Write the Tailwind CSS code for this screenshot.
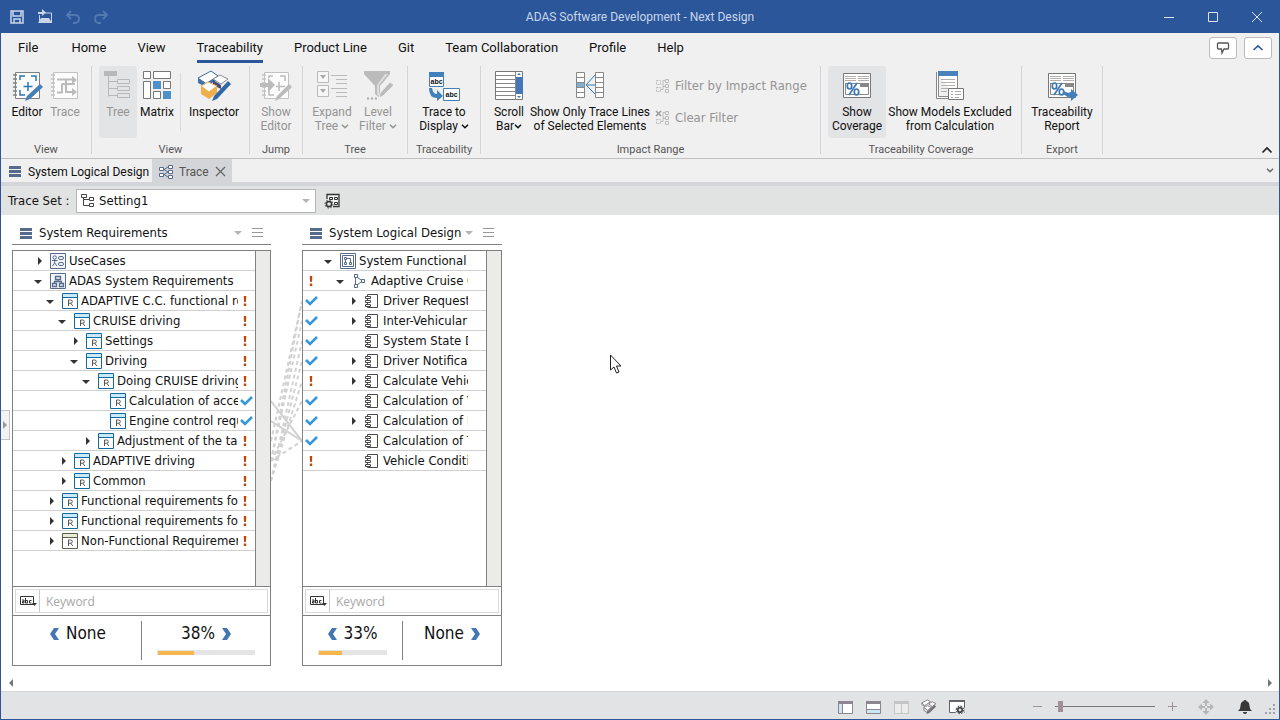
<!DOCTYPE html>
<html lang="en">
<head>
<meta charset="utf-8">
<title>ADAS Software Development - Next Design</title>
<script src="https://cdn.jsdelivr.net/npm/@tailwindcss/browser@4"></script>
</head>
<body class="h-screen overflow-hidden bg-white font-['DejaVu_Sans_Condensed','Open_Sans',sans-serif] text-[13px] text-[#111]">

<svg class="hidden" aria-hidden="true">
  <symbol id="bars" viewBox="0 0 12 11"><path d="M0 0h12v3H0zM0 4h12v3H0zM0 8h12v3H0z" fill="#566b8c"/></symbol>
  <symbol id="down" viewBox="0 0 16 16"><path d="M2 7h8L6 11z" fill="#333"/></symbol>
  <symbol id="right" viewBox="0 0 16 16"><path d="M6 4v8l4-4z" fill="#333"/></symbol>
  <symbol id="caret" viewBox="0 0 8 4"><path d="M0 0h8L4 4z" fill="#b4b4b4"/></symbol>
  <symbol id="menu" viewBox="0 0 11 10"><path d="M0 .5h11M0 4.5h11M0 8.5h11" stroke="#999"/></symbol>
  <symbol id="chev" viewBox="0 0 8 5"><path d="M1 .8l3 3 3-3" fill="none" stroke="currentColor" stroke-width="1.500"/></symbol>
  <symbol id="req" viewBox="0 0 16 16"><path d="M.5.5h15v15H.5z" fill="#fff" stroke="#10699f"/><path d="M1 1h14v3H1z" fill="#c7e9f8"/><path d="M1 4.5h14" stroke="#10699f"/><path d="M6.500 13V7h2.200a1.600 1.600 0 010 3.200H6.500m2.200 0L10.800 13" fill="none" stroke="#555"/></symbol>
  <symbol id="reqnf" viewBox="0 0 16 16"><path d="M.5.5h15v15H.5z" fill="#fff" stroke="#5c5c48"/><path d="M1 1h14v3H1z" fill="#e6eed8"/><path d="M1 4.5h14" stroke="#5c5c48"/><path d="M6.500 13V7h2.200a1.600 1.600 0 010 3.200H6.500m2.200 0L10.800 13" fill="none" stroke="#555"/></symbol>
  <symbol id="usecase" viewBox="0 0 16 16"><g fill="none" stroke="#566b8c"><path d="M.5.5h15v15H.5z" fill="#f3f5f8"/><circle cx="4.7" cy="4.5" r="1.7"/><path d="M2 7.5h5.5M4.7 6.5V10M2.500 13l2.200-3L7 13"/><rect x="8.5" y="3.5" width="5" height="3" rx="1.5"/><rect x="8.5" y="9.5" width="5" height="3" rx="1.5"/></g></symbol>
  <symbol id="hier" viewBox="0 0 16 16"><g fill="none" stroke="#566b8c"><path d="M.5.5h15v15H.5z" fill="#f3f5f8"/><path d="M5.500 3.500h5v3h-5zM2.500 10.500h4v3h-4zM9.500 10.500h4v3h-4zM8 6.500v2M4.500 10.500v-2h7v2" stroke-width="1.300"/></g></symbol>
  <symbol id="func" viewBox="0 0 16 16"><g fill="none" stroke="#566b8c"><path d="M.5.5h15v15H.5z" fill="#fff"/><path d="M2.500 2.500h11v11h-11z"/><path d="M4.500 4.500h2v2h-2zM4.500 9.500h2v2h-2zM9.500 9.500h2v2h-2zM6.500 5.500h4v4M5.500 6.500v3"/></g></symbol>
  <symbol id="flow" viewBox="0 0 16 16"><g fill="#fff" stroke="#566b8c"><path d="M3.500 3l7 5-7 5V3" fill="none"/><path d="M2.500 1.500h3v3h-3zM9.500 6.500h3v3h-3zM2.500 11.500h3v3h-3z"/></g></symbol>
  <symbol id="comp" viewBox="0 0 16 16"><g fill="#fff" stroke="#4a4a4a"><path d="M3.500 1.500h10v13h-10z"/><path d="M1.500 3.500h5v2h-5zM1.500 7.500h5v2h-5zM1.500 11.500h5v2h-5z"/></g></symbol>
  <symbol id="check" viewBox="0 0 13 10"><path d="M1 4l4 4 7-7" fill="none" stroke="#3498db" stroke-width="2.600"/></symbol>
  <symbol id="bang" viewBox="0 0 4 10"><path d="M.8 0h2.400v2.500L2.800 6H1.200L.8 2.500zM.8 7.500h2.400V10H.8z" fill="#c0470a"/></symbol>
  <symbol id="abc" viewBox="0 0 17 12"><path d="M.5 1.500h13v8H.5z" fill="#fff" stroke="#333"/><path d="M2 5h2v3H2.500V6.500H4M5.500 3v5h2V5.500h-2M11.500 5.500h-2V8h2" fill="none" stroke="#333"/><path d="M12 8h5l-2.500 3z" fill="#333"/></symbol>
  <symbol id="notebook" viewBox="0 0 32 32"><path d="M4.500 2.500h24v26h-24z" fill="#fcfcfc" stroke="currentColor"/><path d="M2 5h4M2 9h4M2 13h4M2 17h4M2 21h4M2 25h4" stroke="currentColor" stroke-width="1.600"/></symbol>
  <symbol id="pct" viewBox="0 0 32 32"><path d="M2.500 3.500h27v24h-27z" fill="#fff" stroke="#777"/><path d="M4 6.500h11M17 6.500h11M4 8.500h11M17 8.500h11M4 10.500h11M17 10.500h11" stroke="#b4aeac"/><path d="M4 13h24v4H4z" fill="#888"/><path d="M4.500 13v11.500h23V13" fill="none" stroke="#888"/><path d="M5 14h14v10H5z" fill="#fff"/><g fill="none" stroke="#3c78b4" stroke-width="1.700"><ellipse cx="8.500" cy="16" rx="2.200" ry="3"/><ellipse cx="15.500" cy="22" rx="2.200" ry="3"/><path d="M16 13L8 25"/></g></symbol>
  <symbol id="prev" viewBox="0 0 10 12"><path d="M4 0h5L5 6l4 6H4L0 6z" fill="#4377b4"/></symbol>
  <symbol id="next" viewBox="0 0 10 12"><path d="M6 0H1l4 6-4 6h5l4-6z" fill="#4377b4"/></symbol>
</svg>

<div class="relative flex h-full flex-col border-x border-b border-[#2b579a] bg-[#f0f0f0]">

  <header class="grid h-[33px] shrink-0 grid-cols-[1fr_auto_1fr] items-center bg-[#2b579a] font-['Roboto',sans-serif] text-[12px] text-[#c9d6ea]">
    <div class="flex items-center gap-3 pl-2">
      <button aria-label="Save" class="size-4"><svg viewBox="0 0 16 16" class="size-4"><path d="M2 2h12v12H2zM4 2v5h8V2M5 14v-4h6v4" fill="none" stroke="#c9d6ea" stroke-width="1.500"/></svg></button>
      <button aria-label="Open" class="size-4"><svg viewBox="0 0 16 16" class="size-4"><path d="M2.500 14V6M8 4h6.500v10" fill="none" stroke="#c9d6ea"/><path d="M1 14l3-5h8l3 5zM1 3h4V0l4 3.500L5 7V5H1z" fill="#c9d6ea"/></svg></button>
      <button aria-label="Undo" class="size-4" disabled><svg viewBox="0 0 16 16" class="size-4"><path d="M6 2L2 6l4 4M2 6h8q4 0 4 4 0 3-3 4H8" fill="none" stroke="#5379b3" stroke-width="1.800"/></svg></button>
      <button aria-label="Redo" class="size-4" disabled><svg viewBox="0 0 16 16" class="size-4"><path d="M10 2l4 4-4 4M14 6H6q-4 0-4 4 0 3 3 4h3" fill="none" stroke="#5379b3" stroke-width="1.800"/></svg></button>
    </div>
    <h1 class="pt-px">ADAS Software Development - Next Design</h1>
    <div class="flex justify-end">
      <button aria-label="Minimize" class="flex w-11 justify-center"><svg viewBox="0 0 12 12" class="size-3"><path d="M1 6.500h10" stroke="#dbe4f1"/></svg></button>
      <button aria-label="Maximize" class="flex w-11 justify-center"><svg viewBox="0 0 12 12" class="size-3"><path d="M1.500 1.500h9v9h-9z" fill="none" stroke="#dbe4f1"/></svg></button>
      <button aria-label="Close" class="flex w-11 justify-center"><svg viewBox="0 0 12 12" class="size-3"><path d="M1 1l10 10M11 1L1 11" stroke="#dbe4f1"/></svg></button>
    </div>
  </header>

  <nav class="flex h-[29px] shrink-0 items-start font-['Roboto',sans-serif] text-[13px] leading-[28px]">
    <div class="flex flex-1 gap-[31px] pl-[17px]">
      <button class="mr-[2px] h-[30px] pb-px">File</button><button class="h-[30px] pb-px">Home</button><button class="h-[30px] pb-px">View</button>
      <button class="h-[30px] border-b-3 border-[#2b579a] pt-px">Traceability</button>
      <button class="h-[30px] pb-px">Product Line</button><button class="h-[30px] pb-px">Git</button><button class="h-[30px] pb-px">Team Collaboration</button><button class="h-[30px] pb-px">Profile</button><button class="h-[30px] pb-px">Help</button>
    </div>
    <div class="flex gap-[7px] pt-1 pr-[7px]">
      <button aria-label="Feedback" class="flex h-[22px] w-7 items-center justify-center rounded-[3px] border border-[#bbb] bg-white"><svg viewBox="0 0 14 14" class="size-[14px]"><path d="M2.500 2h9q1 0 1 1v4q0 1-1 1H8l-2 4-.5-4h-3q-1 0-1-1V3q0-1 1-1z" fill="none" stroke="#555" stroke-width="1.300"/></svg></button>
      <button aria-label="Hide ribbon" class="flex h-[22px] w-7 items-center justify-center rounded-[3px] border border-[#bbb] bg-white"><svg viewBox="0 0 12 8" class="h-2 w-3"><path d="M1.500 6L6 1.800 10.500 6" fill="none" stroke="#2b579a" stroke-width="1.600"/></svg></button>
    </div>
  </nav>

  <section aria-label="Ribbon" class="flex h-[97px] shrink-0 border-b border-[#bfbfbf] pt-1 pb-1 font-['Roboto',sans-serif] text-[12px] leading-[14px] [&_button]:whitespace-nowrap">
    <div class="flex w-[91px] flex-col border-r border-[#d4d4d8]">
      <div class="flex h-[77px] shrink-0 justify-center">
        <button class="flex h-[72px] w-[38px] flex-col items-center gap-[3px] pt-1"><svg viewBox="0 0 32 32" class="size-8 shrink-0 text-[#808080]"><use href="#notebook"/><path d="M9 10V6h5M20 6h5v5M9 20v5h5M20 25h3M17 12v9M12.500 16.500h9" fill="none" stroke="#2a77b8" stroke-width="1.500"/><path d="M14 31l2-5L29 14l3 3-13 12z" fill="#4580b9"/></svg>Editor</button>
        <button disabled class="flex h-[72px] w-[38px] flex-col items-center gap-[3px] pt-1 text-[#949494]"><svg viewBox="0 0 32 32" class="size-8 shrink-0 text-[#c2c2c2]"><use href="#notebook"/><path d="M8 9.500h18M8 22.500h5v-9M17 9v13h9M13 14h13" fill="none" stroke="#bbb" stroke-width="2"/><path d="M23 6l5 4-5 4zM23 18l5 4-5 4z" fill="#bbb"/></svg>Trace</button>
      </div>
      <div class="text-center text-[11px] text-[#555]">View</div>
    </div>
    <div class="flex w-[158px] flex-col border-r border-[#d4d4d8]">
      <div class="flex h-[77px] shrink-0 pl-[7px]">
        <button disabled class="flex h-[72px] w-[38px] flex-col items-center gap-[3px] rounded-[3px] bg-[#e2e4e6] pt-1 text-[#949494]"><svg viewBox="0 0 32 32" class="size-8 shrink-0"><path d="M2 1h13v5H2z" fill="#b8b8b8"/><path d="M6.500 6v20.500M6.500 11.500h9M6.500 18.500h9M6.500 25.500h9M15.500 9.500h12v4h-12zM15.500 16.500h12v4h-12zM15.500 23.500h12v4h-12z" fill="none" stroke="#b8b8b8"/></svg>Tree</button>
        <button class="ml-px flex h-[72px] w-[38px] flex-col items-center gap-[3px] pt-1"><svg viewBox="0 0 32 32" class="size-8 shrink-0"><g fill="#fff" stroke="#777"><path d="M2.500 1.500h7v7h-7zM12.500 1.500h17v7h-17zM2.500 11.500h7v17h-7zM22.500 11.500h7v7h-7zM12.500 21.500h7v7h-7z"/></g><path d="M12 11h8v8h-8zM22 21h8v8h-8z" fill="#5090c8"/></svg>Matrix</button>
        <div class="mt-[7px] ml-1 h-[58px] w-px bg-[#d8dadc]"></div>
        <button class="ml-[7px] flex h-[72px] w-[52px] flex-col items-center gap-[3px] pt-1"><svg viewBox="0 0 36 32" class="h-8 w-9 shrink-0"><path d="M2 8l13-7 7 5-12 8z" fill="#fff" stroke="#3a6ba5"/><path d="M2 8l8 5v4l-8-4zM10 13l12-7v3l-12 8z" fill="#3f70b0"/><path d="M17 9l7-4 8 4-7 5z" fill="#fff" stroke="#8a8d96"/><path d="M17 10l8 5v4l-8-4z" fill="#444a7d"/><path d="M5 16l7-4 9 4-8 6z" fill="#fff" stroke="#edb04a"/><path d="M5 16l8 6v7l-8-5zM13 22l8-6v7l-8 6z" fill="#edb04a"/><path d="M16 31l2-5 14-15 3 3-14 15z" fill="#3268a8"/></svg>Inspector</button>
      </div>
      <div class="text-center text-[11px] text-[#555]">View</div>
    </div>
    <div class="flex w-[53px] flex-col border-r border-[#d4d4d8]">
      <div class="flex h-[77px] shrink-0 justify-center">
        <button disabled class="flex h-[72px] w-[44px] flex-col items-center gap-[3px] pt-1 text-[#949494]"><svg viewBox="0 0 32 32" class="size-8 shrink-0 text-[#c2c2c2]"><use href="#notebook"/><path d="M9 8V6h4M20 6h5v5M9 20v5h5M19 12v9M16 16.500h9" fill="none" stroke="#bbb" stroke-width="1.500"/><path d="M0 13h8V8l7 7-7 7v-5H0zM15 31l2-5L29 14l3 3-13 12z" fill="#bbb"/></svg><span>Show<br>Editor</span></button>
      </div>
      <div class="text-center text-[11px] text-[#555]">Jump</div>
    </div>
    <div class="flex w-[105px] flex-col border-r border-[#d4d4d8]">
      <div class="flex h-[77px] shrink-0 justify-center gap-[2px]">
        <button disabled class="flex h-[72px] w-[44px] flex-col items-center gap-[3px] pt-1 text-[#949494]"><svg viewBox="0 0 32 32" class="size-8 shrink-0"><path d="M1.500 1.500h11v11h-11zM1.500 15.500h11v11h-11z" fill="#f6f6f6" stroke="#bbb"/><path d="M4 5h6l-3 4zM4 19h6l-3 4z" fill="#aaa"/><path d="M15 5.500h16M20 9.500h11M20 13.500h11M15 18.500h16M20 22.500h11M20 26.500h11" stroke="#bbb"/></svg><span>Expand<br>Tree <svg class="inline h-[5px] w-2"><use href="#chev"/></svg></span></button>
        <button disabled class="flex h-[72px] w-[44px] flex-col items-center gap-[3px] pt-1 text-[#949494]"><svg viewBox="0 0 32 32" class="size-8 shrink-0"><path d="M2 1h26v3L18 16v12l-5-4v-8L2 4z" fill="#bbb"/><path d="M15 15v9l2 2V15L26 4h-3z" fill="#ddd"/><path d="M17 28l1-5L28 12l4 3-11 11z" fill="#bbb" stroke="#f0f0f0"/><path d="M5 28.500h11" stroke="#aaa" stroke-width="2" stroke-dasharray="2 2"/></svg><span>Level<br>Filter <svg class="inline h-[5px] w-2"><use href="#chev"/></svg></span></button>
      </div>
      <div class="text-center text-[11px] text-[#555]">Tree</div>
    </div>
    <div class="flex w-[73px] flex-col border-r border-[#d4d4d8]">
      <div class="flex h-[77px] shrink-0 justify-center">
        <button class="flex h-[72px] flex-col items-center gap-[3px] pt-1"><svg viewBox="0 0 32 32" class="size-8 shrink-0"><path d="M1.500 2.500h14v14h-14zM15.500 18.500h16v12h-16z" fill="#fff" stroke="#4180ba"/><path d="M1 2h15v5H1z" fill="#4180ba"/><path d="M1 18h3q1 6 5 6v-4l6 6-6 5v-3Q1 28 1 18z" fill="#4180ba"/><g fill="#111" font-family="Liberation Sans" font-weight="700" font-size="7"><text x="2.500" y="14">abc</text><text x="17.500" y="27">abc</text></g></svg><span>Trace to<br>Display <svg class="inline h-[5px] w-2"><use href="#chev"/></svg></span></button>
      </div>
      <div class="text-center text-[11px] text-[#555]">Traceability</div>
    </div>
    <div class="flex w-[340px] flex-col border-r border-[#d4d4d8]">
      <div class="flex h-[77px] shrink-0 pl-[10px]">
        <button class="flex h-[72px] w-9 flex-col items-center gap-[3px] pt-1"><svg viewBox="0 0 32 32" class="size-8 shrink-0"><path d="M2.500 1.500h27v28h-27z" fill="#fff" stroke="#777"/><path d="M3 5.500h19M3 9.500h19M3 13.500h19M3 17.500h19M3 21.500h19M3 25.500h19M22.500 2v27" stroke="#888"/><path d="M23 7h7v17h-7z" fill="#4377b8"/><path d="M24 5h4l-2-2zM24 26h4l-2 2z" fill="#4377b8"/></svg><span>Scroll<br>Bar<svg class="inline h-[5px] w-2"><use href="#chev"/></svg></span></button>
        <button class="ml-1 flex h-[72px] w-[118px] flex-col items-center gap-[3px] pt-1"><svg viewBox="0 0 32 32" class="size-8 shrink-0"><g fill="#fff" stroke="#888"><path d="M2.500 2.500h8v25h-8zM21.500 2.500h8v25h-8zM3 7.500h7M3 12.500h7M3 17.500h7M3 22.500h7M22 7.500h7M22 12.500h7M22 17.500h7M22 22.500h7"/></g><path d="M3 13h7v4H3z" fill="#7fb0d6"/><path d="M21 5l-9 10 9 9M12 15h9" fill="none" stroke="#3079b5"/></svg><span>Show Only Trace Lines<br>of Selected Elements</span></button>
        <div class="ml-[6px] flex flex-col gap-3 pt-[10px] font-['DejaVu_Sans_Condensed','Open_Sans',sans-serif] text-[13px] leading-5 text-[#949494]">
          <button disabled class="flex items-center gap-1"><svg viewBox="0 0 16 16" class="size-4"><g fill="none" stroke="#bbb"><path d="M1.500 2.500h4v4h-4zM1.500 9.500h4v4h-4z" stroke-dasharray="2 1"/><path d="M10.500 1.500h3v3h-3zM10.500 6.500h3v3h-3zM10.500 11.500h3v3h-3zM6 11.500h2v-9h2M8 8.500h2"/></g></svg>Filter by Impact Range</button>
          <button disabled class="flex items-center gap-1"><svg viewBox="0 0 16 16" class="size-4"><g fill="none" stroke="#bbb"><path d="M1 1l5 5M6 1L1 6" stroke="#999" stroke-width="1.500"/><path d="M1.500 9.500h4v4h-4z" stroke-dasharray="2 1"/><path d="M10.500 1.500h3v3h-3zM10.500 6.500h3v3h-3zM10.500 11.500h3v3h-3zM6 11.500h2v-9h2M8 8.500h2"/></g></svg>Clear Filter</button>
        </div>
      </div>
      <div class="text-center text-[11px] text-[#555]">Impact Range</div>
    </div>
    <div class="flex w-[201px] flex-col border-r border-[#d4d4d8]">
      <div class="flex h-[77px] shrink-0 pl-[7px]">
        <button aria-pressed="true" class="flex h-[72px] w-[58px] flex-col items-center gap-[3px] rounded-[3px] bg-[#e2e4e6] pt-1"><svg class="size-8 shrink-0"><use href="#pct"/></svg><span>Show<br>Coverage</span></button>
        <button class="ml-[2px] flex h-[72px] w-[124px] flex-col items-center gap-[3px] pt-1"><svg viewBox="0 0 32 32" class="size-8 shrink-0"><path d="M2.500 2v26.500h20M4.500 2.500h19v24h-19z" fill="#fff" stroke="#888"/><path d="M4 1h20v5H4z" fill="#4a83ba"/><path d="M7 9.500h14M7 12.500h14M7 15.500h14M7 18.500h7M7 21.500h6" stroke="#b4aeac"/><path d="M14.500 18.500h15v11h-15z" fill="#fff" stroke="#777"/><path d="M17 21.500h2M21 21.500h6M17 24.500h2M21 24.500h6M17 27.500h2M21 27.500h4" stroke="#aaa"/></svg><span>Show Models Excluded<br>from Calculation</span></button>
      </div>
      <div class="text-center text-[11px] text-[#555]">Traceability Coverage</div>
    </div>
    <div class="flex w-[81px] flex-col border-r border-[#d4d4d8]">
      <div class="flex h-[77px] shrink-0 justify-center">
        <button class="flex h-[72px] flex-col items-center gap-[3px] pt-1"><svg viewBox="0 0 32 32" class="size-8 shrink-0"><use href="#pct"/><path d="M17 20q4 4 8 2v-3l7 6-7 6v-4q-7 1-8-7z" fill="#4180ba"/></svg><span>Traceability<br>Report</span></button>
      </div>
      <div class="text-center text-[11px] text-[#555]">Export</div>
    </div>
    <button aria-label="Collapse ribbon" class="mr-[6px] ml-auto self-end"><svg viewBox="0 0 12 8" class="h-2 w-3"><path d="M1.500 6.500L6 2l4.500 4.500" fill="none" stroke="#222" stroke-width="1.700"/></svg></button>
  </section>

  <div class="flex h-[26px] shrink-0 items-start border-b-3 border-[#d4d5d9] font-['Roboto',sans-serif] text-[12px] leading-[22px]">
    <button class="flex h-[23px] min-w-[151px] items-center gap-[7px] pt-[2px] pl-2"><svg class="h-[11px] w-3"><use href="#bars"/></svg>System Logical Design</button>
    <div class="flex h-[23px] w-[80px] items-center bg-[#d4d5d9] pt-[2px] pl-[6px] text-[#555]">
      <button class="flex items-center gap-[5px]"><svg viewBox="0 0 16 16" class="size-4"><g fill="#fff" stroke="#566b8c"><path d="M1.500 3.500h4v3h-4zM1.500 9.500h4v3h-4zM10.500 1.500h4v3h-4zM10.500 6.500h4v3h-4zM10.500 11.500h4v3h-4zM6 5.500L10 3M6 10.500L10 8M6 10.500l4 2.500M6 5.500L10 8"/></g></svg>Trace</button>
      <button aria-label="Close tab" class="mr-[6px] ml-auto"><svg viewBox="0 0 11 11" class="size-[11px]"><path d="M1 1l9 9M10 1l-9 9" stroke="#666" stroke-width="1.300"/></svg></button>
    </div>
    <button aria-label="More tabs" class="mt-[9px] mr-[5px] ml-auto text-[#666]"><svg class="h-[5px] w-2"><use href="#chev"/></svg></button>
  </div>

  <div class="flex h-[30px] shrink-0 items-center border-t border-[#d4d5d9] bg-[#e1e2e2] pl-[7px]">
    <label for="set" class="w-[68px] whitespace-nowrap">Trace Set :</label>
    <div class="relative">
      <select id="set" class="block h-6 w-60 appearance-none border border-[#b5b5b5] bg-white pl-[22px]"><option>Setting1</option></select>
      <svg viewBox="0 0 16 16" class="pointer-events-none absolute top-1 left-1 size-4"><path d="M1.500 1.500h5v3h-5zM9.500 4.500h4v3h-4zM9.500 10.500h4v3h-4zM3.500 5v7.500h6M3.500 6.500h6" fill="none" stroke="#444"/></svg>
      <svg class="pointer-events-none absolute top-[10px] right-[6px] h-1 w-2"><use href="#caret"/></svg>
    </div>
    <button aria-label="Trace set settings" class="ml-2"><svg viewBox="0 0 16 16" class="size-4"><path d="M3 6V1.500h12v12H9" fill="#f4f4f4" stroke="#333" stroke-width="1.300"/><path d="M5.500 4.500h3v2h-3zM10.500 4.500h3v2h-3zM10.500 9.500h3v2h-3z" fill="none" stroke="#333"/><circle cx="5" cy="11" r="2.600" fill="none" stroke="#333" stroke-width="1.500"/><circle cx="5" cy="11" r="4" fill="none" stroke="#333" stroke-dasharray="1.500 1.600"/></svg></button>
  </div>

  <main class="relative flex min-h-0 flex-1 items-start bg-white pt-[7px] pl-[11px]">

    <section aria-label="System Requirements" class="w-[259px] shrink-0">
      <header class="flex h-[23px] items-center border-b border-[#808080] px-2"><svg class="mr-[7px] h-[11px] w-3"><use href="#bars"/></svg><h2>System Requirements</h2>
        <button aria-label="View options" class="ml-auto"><svg class="h-1 w-2"><use href="#caret"/></svg></button>
        <button aria-label="Menu" class="ml-[10px]"><svg class="h-[10px] w-[11px]"><use href="#menu"/></svg></button></header>
      <div class="mt-[5px] border border-[#808080]">
        <div class="flex h-[335px]">
          <ul class="min-w-0 flex-1 [&_.w-1]:mr-[3px] [&_b]:flex [&_b]:w-[17px] [&_b]:shrink-0 [&_b]:items-center [&_b]:justify-center [&_i]:mr-[2px] [&_i]:w-4 [&_i]:shrink-0 [&_span]:ml-[3px] [&_span]:flex-1 [&_span]:overflow-hidden [&_span]:pt-px [&_span]:whitespace-nowrap [&_svg]:shrink-0 [&>li]:flex [&>li]:h-5 [&>li]:items-center [&>li]:border-b [&>li]:border-[#d0d0d0]">
            <li class="pl-[19px]"><svg class="mr-[2px] size-4"><use href="#right"/></svg><svg class="size-4"><use href="#usecase"/></svg><span>UseCases</span><b></b></li>
            <li class="pl-[19px]"><svg class="mr-[2px] size-4"><use href="#down"/></svg><svg class="size-4"><use href="#hier"/></svg><span>ADAS System Requirements</span><b></b></li>
            <li class="pl-[31px]"><svg class="mr-[2px] size-4"><use href="#down"/></svg><svg class="size-4"><use href="#req"/></svg><span>ADAPTIVE C.C. functional requirements</span><b><svg class="h-[10px] w-1"><use href="#bang"/></svg></b></li>
            <li class="pl-[43px]"><svg class="mr-[2px] size-4"><use href="#down"/></svg><svg class="size-4"><use href="#req"/></svg><span>CRUISE driving</span><b><svg class="h-[10px] w-1"><use href="#bang"/></svg></b></li>
            <li class="pl-[55px]"><svg class="mr-[2px] size-4"><use href="#right"/></svg><svg class="size-4"><use href="#req"/></svg><span>Settings</span><b><svg class="h-[10px] w-1"><use href="#bang"/></svg></b></li>
            <li class="pl-[55px]"><svg class="mr-[2px] size-4"><use href="#down"/></svg><svg class="size-4"><use href="#req"/></svg><span>Driving</span><b><svg class="h-[10px] w-1"><use href="#bang"/></svg></b></li>
            <li class="pl-[67px]"><svg class="mr-[2px] size-4"><use href="#down"/></svg><svg class="size-4"><use href="#req"/></svg><span>Doing CRUISE driving</span><b><svg class="h-[10px] w-1"><use href="#bang"/></svg></b></li>
            <li class="pl-[79px]"><i></i><svg class="size-4"><use href="#req"/></svg><span>Calculation of acceleration</span><b><svg class="h-[10px] w-[13px]"><use href="#check"/></svg></b></li>
            <li class="pl-[79px]"><i></i><svg class="size-4"><use href="#req"/></svg><span>Engine control request</span><b><svg class="h-[10px] w-[13px]"><use href="#check"/></svg></b></li>
            <li class="pl-[67px]"><svg class="mr-[2px] size-4"><use href="#right"/></svg><svg class="size-4"><use href="#req"/></svg><span>Adjustment of the target</span><b><svg class="h-[10px] w-1"><use href="#bang"/></svg></b></li>
            <li class="pl-[43px]"><svg class="mr-[2px] size-4"><use href="#right"/></svg><svg class="size-4"><use href="#req"/></svg><span>ADAPTIVE driving</span><b><svg class="h-[10px] w-1"><use href="#bang"/></svg></b></li>
            <li class="pl-[43px]"><svg class="mr-[2px] size-4"><use href="#right"/></svg><svg class="size-4"><use href="#req"/></svg><span>Common</span><b><svg class="h-[10px] w-1"><use href="#bang"/></svg></b></li>
            <li class="pl-[31px]"><svg class="mr-[2px] size-4"><use href="#right"/></svg><svg class="size-4"><use href="#req"/></svg><span>Functional requirements for</span><b><svg class="h-[10px] w-1"><use href="#bang"/></svg></b></li>
            <li class="pl-[31px]"><svg class="mr-[2px] size-4"><use href="#right"/></svg><svg class="size-4"><use href="#req"/></svg><span>Functional requirements for</span><b><svg class="h-[10px] w-1"><use href="#bang"/></svg></b></li>
            <li class="pl-[31px]"><svg class="mr-[2px] size-4"><use href="#right"/></svg><svg class="size-4"><use href="#reqnf"/></svg><span>Non-Functional Requirements</span><b><svg class="h-[10px] w-1"><use href="#bang"/></svg></b></li>
          </ul>
          <div class="w-[15px] border-l border-[#808080] bg-[#ebebea]"></div>
        </div>
        <div class="flex h-[30px] border-y border-[#808080] p-[2px]">
          <div class="flex min-w-0 flex-1 items-center border border-[#dadada] pl-1"><button aria-label="Search mode" class="mr-[2px]"><svg class="h-3 w-[17px]"><use href="#abc"/></svg></button><input type="text" aria-label="Keyword" placeholder="Keyword" class="h-full min-w-0 flex-1 border-l border-[#c8c8c8] pl-[6px] font-['Open_Sans',sans-serif] text-[12px] outline-none placeholder:text-[#a8a8a8]"></div>
        </div>
        <div class="grid h-[49px] grid-cols-[129px_1fr] py-[5px] text-[17px] leading-6">
          <div class="flex items-start justify-center gap-[6px] border-r border-[#808080] pl-[2px]"><svg class="mt-[7px] h-3 w-[10px]"><use href="#prev"/></svg>None</div>
          <div class="flex flex-col px-[15px]">
            <div class="flex items-start justify-center gap-[6px]">38%<svg class="mt-[7px] h-3 w-[10px]"><use href="#next"/></svg></div>
            <div class="mt-[5px] h-[5px] bg-[#e5e5e5] px-px pt-px"><div class="h-1 bg-[#f7b64b]" style="width:38%"></div></div>
          </div>
        </div>
      </div>
    </section>

    <svg viewBox="0 0 31 200" class="mt-[68px] h-[200px] w-[31px] shrink-0"><g fill="none" stroke="#d2d2d2" stroke-width="2"><path d="M0 111l31 40M0 131l31 20"/><path d="M0 151L31 11M0 171L31 11M0 171L31 31M0 191L31 51M0 191L31 71M0 171L31 111M0 171l31-20M0 191L31 91" stroke-dasharray="4 3"/></g></svg>

    <section aria-label="System Logical Design" class="w-[200px] shrink-0">
      <header class="flex h-[23px] items-center border-b border-[#808080] px-2"><svg class="mr-[7px] h-[11px] w-3 shrink-0"><use href="#bars"/></svg><h2 class="whitespace-nowrap">System Logical Design</h2>
        <button aria-label="View options" class="ml-auto"><svg class="h-1 w-2"><use href="#caret"/></svg></button>
        <button aria-label="Menu" class="ml-[10px]"><svg class="h-[10px] w-[11px]"><use href="#menu"/></svg></button></header>
      <div class="mt-[5px] border border-[#808080]">
        <div class="flex h-[335px]">
          <ul class="min-w-0 flex-1 [&_.w-1]:mr-[2px] [&_b]:flex [&_b]:w-[17px] [&_b]:shrink-0 [&_b]:items-center [&_b]:justify-center [&_i]:w-4 [&_i]:shrink-0 [&_span]:ml-[3px] [&_span]:flex-1 [&_span]:overflow-hidden [&_span]:pt-px [&_span]:whitespace-nowrap [&_svg]:shrink-0 [&>li]:flex [&>li]:h-5 [&>li]:items-center [&>li]:border-b [&>li]:border-[#d0d0d0] [&>li]:pr-[18px]">
            <li><b class="mr-[2px]"></b><svg class="mr-[2px] size-4"><use href="#down"/></svg><svg class="size-4"><use href="#func"/></svg><span>System Functional</span></li>
            <li><b class="mr-[14px]"><svg class="h-[10px] w-1"><use href="#bang"/></svg></b><svg class="mr-[2px] size-4"><use href="#down"/></svg><svg class="size-4"><use href="#flow"/></svg><span>Adaptive Cruise Control</span></li>
            <li><b class="mr-[26px]"><svg class="h-[10px] w-[13px]"><use href="#check"/></svg></b><svg class="mr-[2px] size-4"><use href="#right"/></svg><svg class="size-4"><use href="#comp"/></svg><span>Driver Request</span></li>
            <li><b class="mr-[26px]"><svg class="h-[10px] w-[13px]"><use href="#check"/></svg></b><svg class="mr-[2px] size-4"><use href="#right"/></svg><svg class="size-4"><use href="#comp"/></svg><span>Inter-Vehicular</span></li>
            <li><b class="mr-[28px]"><svg class="h-[10px] w-[13px]"><use href="#check"/></svg></b><i></i><svg class="size-4"><use href="#comp"/></svg><span>System State Decision</span></li>
            <li><b class="mr-[26px]"><svg class="h-[10px] w-[13px]"><use href="#check"/></svg></b><svg class="mr-[2px] size-4"><use href="#right"/></svg><svg class="size-4"><use href="#comp"/></svg><span>Driver Notification</span></li>
            <li><b class="mr-[26px]"><svg class="h-[10px] w-1"><use href="#bang"/></svg></b><svg class="mr-[2px] size-4"><use href="#right"/></svg><svg class="size-4"><use href="#comp"/></svg><span>Calculate Vehicle</span></li>
            <li><b class="mr-[28px]"><svg class="h-[10px] w-[13px]"><use href="#check"/></svg></b><i></i><svg class="size-4"><use href="#comp"/></svg><span>Calculation of Vehicle</span></li>
            <li><b class="mr-[26px]"><svg class="h-[10px] w-[13px]"><use href="#check"/></svg></b><svg class="mr-[2px] size-4"><use href="#right"/></svg><svg class="size-4"><use href="#comp"/></svg><span>Calculation of Inter</span></li>
            <li><b class="mr-[28px]"><svg class="h-[10px] w-[13px]"><use href="#check"/></svg></b><i></i><svg class="size-4"><use href="#comp"/></svg><span>Calculation of Target</span></li>
            <li><b class="mr-[28px]"><svg class="h-[10px] w-1"><use href="#bang"/></svg></b><i></i><svg class="size-4"><use href="#comp"/></svg><span>Vehicle Condition</span></li>
          </ul>
          <div class="w-[15px] border-l border-[#808080] bg-[#ebebea]"></div>
        </div>
        <div class="flex h-[30px] border-y border-[#808080] p-[2px]">
          <div class="flex min-w-0 flex-1 items-center border border-[#dadada] pl-1"><button aria-label="Search mode" class="mr-[2px]"><svg class="h-3 w-[17px]"><use href="#abc"/></svg></button><input type="text" aria-label="Keyword" placeholder="Keyword" class="h-full min-w-0 flex-1 border-l border-[#c8c8c8] pl-[6px] font-['Open_Sans',sans-serif] text-[12px] outline-none placeholder:text-[#a8a8a8]"></div>
        </div>
        <div class="grid h-[49px] grid-cols-[100px_1fr] py-[5px] text-[17px] leading-6">
          <div class="flex flex-col border-r border-[#808080] px-[15px]">
            <div class="flex items-start justify-center gap-[6px]"><svg class="mt-[7px] h-3 w-[10px]"><use href="#prev"/></svg>33%</div>
            <div class="mt-[5px] h-[5px] bg-[#e5e5e5] px-px pt-px"><div class="h-1 bg-[#f7b64b]" style="width:34%"></div></div>
          </div>
          <div class="flex items-start justify-center gap-[6px]">None<svg class="mt-[7px] h-3 w-[10px]"><use href="#next"/></svg></div>
        </div>
      </div>
    </section>

    <button aria-label="Open side panel" class="absolute top-[195px] left-0 flex h-[30px] w-[9px] items-center justify-center border border-l-0 border-[#c4c4c4] bg-[#f3f3f4]"><svg viewBox="0 0 4 8" class="h-2 w-1"><path d="M0 0v8l4-4z" fill="#999"/></svg></button>
    <svg viewBox="0 0 12 20" class="absolute top-[139px] left-[608px] h-5 w-3"><path d="M1.500 1v15l3.500-3 2.500 6 2.500-1-2.500-6H12z" fill="#fff" stroke="#222"/></svg>
    <div class="absolute inset-x-0 bottom-1 flex justify-between pr-[7px] pl-2">
      <button aria-label="Scroll left"><svg viewBox="0 0 4 8" class="h-2 w-1"><path d="M4 0v8L0 4z" fill="#777"/></svg></button>
      <button aria-label="Scroll right"><svg viewBox="0 0 4 8" class="h-2 w-1"><path d="M0 0v8l4-4z" fill="#777"/></svg></button>
    </div>
  </main>

  <footer class="flex h-[28px] shrink-0 items-center justify-end border-t border-[#d6d6d8] bg-[#e2e3e5] pt-[2px] pr-[3px]">
    <div class="flex gap-3 pr-[67px]">
      <button aria-label="Left pane" class="size-4"><svg viewBox="0 0 16 16" class="size-4"><path d="M1.500 2.500h14v12h-14z" fill="#fff" stroke="#8c8690"/><path d="M1 2h15v3H1z" fill="#8c8690"/><path d="M2 5h3v9H2z" fill="#cbe7f5"/><path d="M5.500 5v9" stroke="#8c8690"/></svg></button>
      <button aria-label="Bottom pane" class="size-4"><svg viewBox="0 0 16 16" class="size-4"><path d="M1.500 2.500h14v12h-14z" fill="#fff" stroke="#8c8690"/><path d="M1 2h15v3H1z" fill="#8c8690"/><path d="M2 11h13v3H2z" fill="#cbe7f5"/><path d="M2 10.500h13" stroke="#8c8690"/></svg></button>
      <button aria-label="Split pane" class="size-4" disabled><svg viewBox="0 0 16 16" class="size-4"><path d="M1.500 2.500h14v12h-14z" fill="#ececec" stroke="#c4c4c4"/><path d="M1 2h15v3H1zM8 5h1v9H8z" fill="#c4c4c4"/></svg></button>
      <button aria-label="Inspector" class="size-4"><svg viewBox="0 0 17 17" class="size-4"><g fill="#fff" stroke="#868088"><path d="M1 4l6-3 3 2-6 4zM8 5l4-2 4 2-4 3zM3 9l4-2 4 2-4 3z"/><path d="M3 9v3l4 3v-3M1 4v2l3 2" fill="none"/></g><path d="M6 16l1-3 7-7 2 2-7 7z" fill="#77717a"/></svg></button>
      <button aria-label="Window settings" class="size-4"><svg viewBox="0 0 16 16" class="size-4"><path d="M.5 1.500h15v12H.5z" fill="#fff" stroke="#66606a"/><path d="M0 1h16v2H0z" fill="#66606a"/><circle cx="11" cy="11" r="5" fill="#e2e3e5"/><circle cx="11" cy="11" r="2.200" fill="none" stroke="#333" stroke-width="1.500"/><circle cx="11" cy="11" r="3.700" fill="none" stroke="#333" stroke-dasharray="1.500 1.400"/></svg></button>
    </div>
    <button aria-label="Zoom out" class="mr-3"><svg viewBox="0 0 11 11" class="size-[11px]"><path d="M1 5.500h9" stroke="#a09098"/></svg></button>
    <input type="range" min="0" max="100" value="3" aria-label="Zoom" class="h-[11px] w-[100px] appearance-none bg-[linear-gradient(#777,#777)] bg-size-[100%_1px] bg-center bg-no-repeat [&::-webkit-slider-thumb]:h-[11px] [&::-webkit-slider-thumb]:w-[5px] [&::-webkit-slider-thumb]:appearance-none [&::-webkit-slider-thumb]:bg-[#a09098]">
    <button aria-label="Zoom in" class="ml-3"><svg viewBox="0 0 11 11" class="size-[11px]"><path d="M1 5.500h9M5.500 1v9" stroke="#a09098"/></svg></button>
    <button aria-label="Fit view" class="ml-5" disabled><svg viewBox="0 0 16 16" class="size-4"><path d="M8 0l3.500 4h-7zM8 16l3.500-4h-7zM0 8l4-3.500v7zM16 8l-4-3.500v7zM7 4h2v3H7zM7 9h2v3H7zM4 7h3v2H4zM9 7h3v2H9z" fill="#b6b6ba"/></svg></button>
    <button aria-label="Notifications" class="ml-[23px]"><svg viewBox="0 0 16 16" class="size-4"><path d="M8 1q1.500 0 1.500 1.200Q12.500 3 12.500 7q0 3 2.500 5H1q2.500-2 2.500-5 0-4 3-4.800Q6.500 1 8 1zM6 13h4q0 2-2 2t-2-2z" fill="#383838"/></svg></button>
    <svg viewBox="0 0 11 11" class="mb-1 ml-3 size-[11px] self-end"><path d="M8 0h2v2H8zM4 4h2v2H4zM8 4h2v2H8zM0 8h2v2H0zM4 8h2v2H4zM8 8h2v2H8z" fill="#a0a0b0"/></svg>
  </footer>
</div>
</body>
</html>
